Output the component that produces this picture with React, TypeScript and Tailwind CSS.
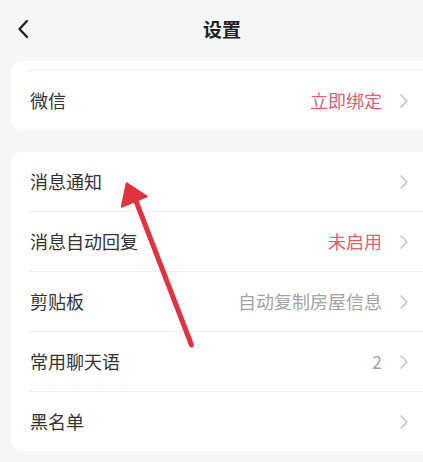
import { ReactNode } from 'react'

type Row = {
  label: string
  value?: string
  tone?: 'red' | 'gray'
}

const groupTwo: Row[] = [
  { label: '消息通知' },
  { label: '消息自动回复', value: '未启用', tone: 'red' },
  { label: '剪贴板', value: '自动复制房屋信息', tone: 'gray' },
  { label: '常用聊天语', value: '2', tone: 'gray' },
  { label: '黑名单' },
]

function Chevron() {
  return (
    <svg width="10" height="16" viewBox="0 0 10 16" fill="none" className="shrink-0">
      <path d="M2 2 L8 8 L2 14" stroke="#c6c6c8" strokeWidth="1.6" strokeLinecap="round" strokeLinejoin="round" />
    </svg>
  )
}

function SettingRow({ row }: { row: Row }) {
  return (
    <div className="h-[59px] flex items-center pl-[19px] pr-[24px]">
      <span className="flex-1 text-[18px] text-[#333333]">{row.label}</span>
      {row.value && (
        <span
          className={
            row.tone === 'red'
              ? 'text-[18px] text-[#e25e72] mr-[17px]'
              : 'text-[18px] text-[#a3a3a3] mr-[17px]'
          }
        >
          {row.value}
        </span>
      )}
      <Chevron />
    </div>
  )
}

function Card({ children, className }: { children: ReactNode; className?: string }) {
  return <div className={`bg-white rounded-[10px] mx-[11px] ${className ?? ''}`}>{children}</div>
}

export default function App() {
  return (
    <div
      className="relative w-[423px] h-[462px] overflow-hidden bg-[#f5f6f8]"
      style={{ fontFamily: '"Noto Sans CJK SC", "Noto Sans", sans-serif' }}
    >
      <div className="w-[444px]">
        {/* Header */}
        <div className="h-[58px] flex items-center">
          <div className="w-[44px] pl-[17px] flex items-center">
            <svg width="13" height="20" viewBox="0 0 13 20" fill="none">
              <path d="M10 2 L2.5 10 L10 18" stroke="#1f1f1f" strokeWidth="2.3" strokeLinecap="round" strokeLinejoin="round" />
            </svg>
          </div>
          <div className="flex-1 text-center text-[19px] font-semibold text-[#222222]">设置</div>
          <div className="w-[44px]" />
        </div>

        {/* Account binding */}
        <Card className="mt-[3px] pt-[9px]">
          <div className="ml-[17px] h-px bg-[#f0f0f0]" />
          <SettingRow row={{ label: '微信', value: '立即绑定', tone: 'red' }} />
        </Card>

        {/* Message settings */}
        <Card className="mt-[22px]">
          {groupTwo.map((row, i) => (
            <div key={row.label}>
              {i > 0 && <div className="ml-[17px] h-px bg-[#efefef]" />}
              <SettingRow row={row} />
            </div>
          ))}
        </Card>
      </div>

      {/* Annotation arrow */}
      <svg className="absolute inset-0 pointer-events-none" width="423" height="462" viewBox="0 0 423 462">
        <line x1="191.5" y1="345" x2="136" y2="201" stroke="#e1323f" strokeWidth="5" strokeLinecap="round" />
        <polygon points="126.5,183 147,196.5 121.5,207" fill="#e1323f" stroke="#e1323f" strokeWidth="1.5" strokeLinejoin="round" />
      </svg>
    </div>
  )
}
